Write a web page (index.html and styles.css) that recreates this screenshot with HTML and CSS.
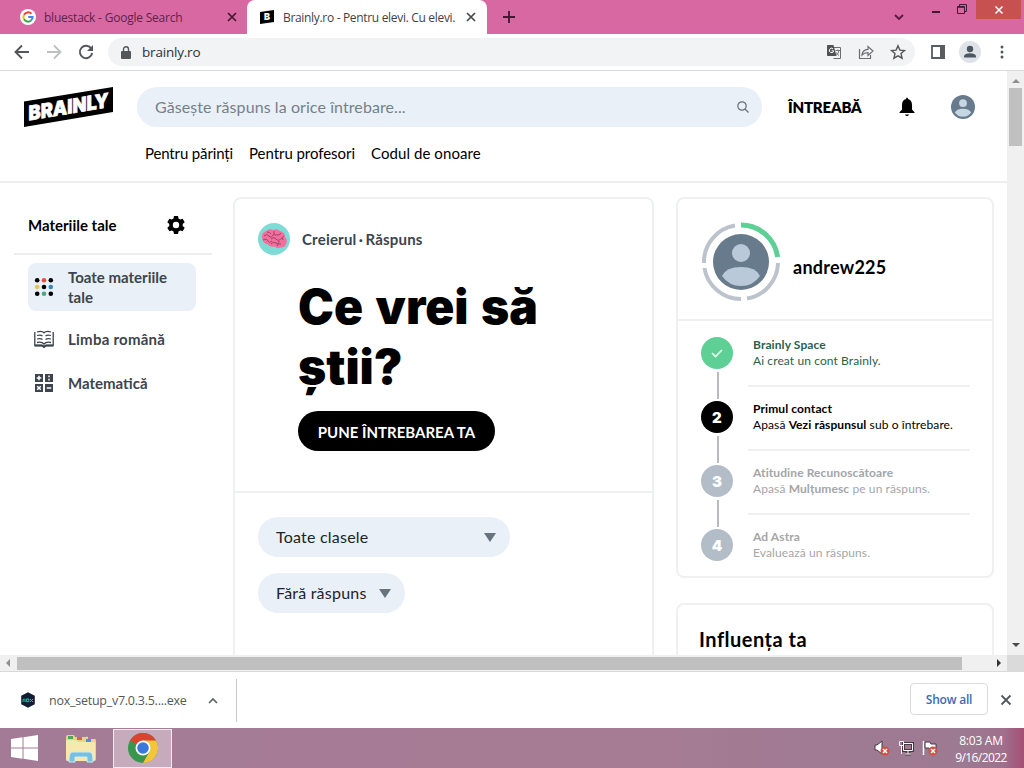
FILE: index.html
```
<!DOCTYPE html>
<html lang="ro">
<head>
  <meta charset="UTF-8">
  <title>Brainly.ro - Pentru elevi. Cu elevi.</title>
  <link rel="stylesheet" href="styles.css">
</head>
<body>

  <div class="tabstrip">
    <div class="tab">
      <svg class="favicon" width="16" height="16" viewBox="0 0 16 16">
        <circle cx="8" cy="8" r="8" fill="#fff"/>
        <g fill="none" stroke-width="2">
          <path d="M11.4 4.8A4.6 4.6 0 0 0 4 5.8" stroke="#ea4335"/>
          <path d="M4 5.8a4.6 4.6 0 0 0 0 4.5" stroke="#fbbc05"/>
          <path d="M4 10.3a4.6 4.6 0 0 0 7 1.2" stroke="#34a853"/>
          <path d="M11 11.5A4.6 4.6 0 0 0 12.6 8H8.2" stroke="#4285f4"/>
        </g>
      </svg>
      <span class="tab-title google">bluestack - Google Search</span>
      <svg class="tab-close" width="10" height="10" viewBox="0 0 10 10"><path d="M1 1l8 8M9 1l-8 8" stroke="#421832" stroke-width="1.7"/></svg>
    </div>
    <div class="tab active">
      <svg class="favicon" width="16" height="16" viewBox="0 0 16 16"><path d="M1 3l14-2v12L1 15z"/><text x="5" y="11.3" font-family="Inter" font-weight="900" font-size="9" fill="#fff">B</text></svg>
      <span class="tab-title brainly">Brainly.ro - Pentru elevi. Cu elevi.</span>
      <svg class="tab-close" width="10" height="10" viewBox="0 0 10 10"><path d="M1 1l8 8M9 1l-8 8" stroke="#44474a" stroke-width="1.7"/></svg>
    </div>
    <svg class="new-tab" width="12" height="12" viewBox="0 0 12 12"><path d="M6 0v12M0 6h12" stroke="#421832" stroke-width="1.8"/></svg>
    <div class="window-buttons">
      <svg class="tab-search" width="10" height="7" viewBox="0 0 10 7"><path d="M1 1l4 4 4-4" fill="none" stroke="#5a1741" stroke-width="1.8"/></svg>
      <svg class="minimize" width="8" height="2" viewBox="0 0 8 2"><path d="M0 0h8v2H0z" fill="#421832"/></svg>
      <svg class="restore" width="10" height="10" viewBox="0 0 10 10"><path d="M.5 2.5h7v7h-7zM.5 3.3h7M2.5 2V.5h7v7H8" fill="none" stroke="#421832"/></svg>
      <div class="window-close"><svg width="8" height="8" viewBox="0 0 8 8"><path d="M.5.5l7 7M7.5.5l-7 7" stroke="#fff" stroke-width="1.5"/></svg></div>
    </div>
  </div>

  <div class="toolbar">
    <svg width="16" height="16" viewBox="0 0 16 16"><path d="M15 8H2M8 1.5L1.5 8 8 14.5" fill="none" stroke="#54575a" stroke-width="1.9"/></svg>
    <svg width="16" height="16" viewBox="0 0 16 16"><path d="M1 8h13M8 1.5L14.5 8 8 14.5" fill="none" stroke="#bdbfc1" stroke-width="1.8"/></svg>
    <svg width="16" height="16" viewBox="0 0 16 16"><path d="M13.3 4.6A6.2 6.2 0 1 0 14.2 9" fill="none" stroke="#54575a" stroke-width="1.9"/><path d="M15 1v6H9z" fill="#54575a"/></svg>
    <div class="omnibox">
      <svg width="10" height="13" viewBox="0 0 10 13"><path d="M1 5h8q1 0 1 1v6q0 1-1 1H1q-1 0-1-1V6q0-1 1-1z" fill="#54575a"/><path d="M2.5 5.500V3.300a2.500 2.500 0 0 1 5 0V5.500" fill="none" stroke="#54575a" stroke-width="1.400"/></svg>
      <span class="url">brainly.ro</span>
      <svg width="16" height="16" viewBox="0 0 16 16"><path d="M5.500 3.500h9v11h-7" fill="none" stroke="#6b6e71"/><path d="M1.500 1h6l3 11h-9Q1 12 1 11V2q0-1 .5-1z" fill="#505356"/><path d="M7 4.800a2.200 2.200 0 1 0 .7 2H5.600" fill="none" stroke="#fff"/><path d="M9.500 6.500H14M11.700 5.500v1M13 6.500q-.5 3-3 5M10.300 8.500q1 2 2.700 3" fill="none" stroke="#777"/></svg>
      <svg width="16" height="16" viewBox="0 0 16 16"><path d="M1.500 5v9.500h11V11" fill="none" stroke="#6b6e71" stroke-width="1.200"/><path d="M4 11q.5-5.500 6-5.700V2.500L15 7l-5 4.500V8.700Q6 8.700 4 11z" fill="none" stroke="#6b6e71" stroke-width="1.200"/></svg>
      <svg width="16" height="16" viewBox="0 0 16 16"><path d="M8 1.800l1.900 4.300 4.600.4L11 9.600l1.100 4.600L8 11.800l-4.100 2.400L5 9.600 1.500 6.500l4.600-.4z" fill="none" stroke="#54575a" stroke-width="1.400"/></svg>
    </div>
    <svg class="side-panel" width="14" height="14" viewBox="0 0 14 14"><path d="M1 1h12v12H1z" fill="none" stroke="#5a5d60" stroke-width="1.800"/><path d="M9 0h5v14H9z" fill="#5a5d60"/></svg>
    <svg class="profile" width="22" height="22" viewBox="0 0 22 22"><circle cx="11" cy="11" r="11" fill="#dfe2e6"/><circle cx="11" cy="8" r="3.200" fill="#4b5864"/><path d="M5 16.500V15q1-2.700 6-2.700t6 2.700v1.500z" fill="#4b5864"/></svg>
    <svg width="4" height="14" viewBox="0 0 4 14" fill="#54575a"><circle cx="2" cy="2" r="1.500"/><circle cx="2" cy="7" r="1.500"/><circle cx="2" cy="12" r="1.500"/></svg>
  </div>

  <div class="viewport">
    <div class="page">
      <header class="header">
        <div class="header-row">
          <svg class="logo" width="89" height="40" viewBox="0 0 89 40">
            <path d="M0 14.500L89 0v25L0 40z"/>
            <text transform="translate(4.500 33.500) skewY(-9.500)" textLength="80" lengthAdjust="spacingAndGlyphs" font-family="Inter" font-weight="900" font-size="20" fill="#fff" stroke="#fff" stroke-width=".7">BRAINLY</text>
          </svg>
          <div class="search">
            <span>Găsește răspuns la orice întrebare...</span>
            <svg width="12" height="12" viewBox="0 0 12 12"><circle cx="5" cy="5" r="4.200" fill="none" stroke="#687078" stroke-width="1.200"/><path d="M8 8l3.500 3.500" stroke="#687078" stroke-width="1.300"/></svg>
          </div>
          <a class="ask">ÎNTREABĂ</a>
          <svg class="bell" width="16" height="20" viewBox="0 0 16 20"><path d="M7 2q0-1.500 1-1.500T9 2q4 .8 4 6v4.500l2.500 2.700V16H.5v-.8L3 12.500V8q0-5.200 4-6zM6 17.500h4q-.5 1.500-2 1.500t-2-1.500z"/></svg>
          <svg class="user" width="24" height="24" viewBox="0 0 56 56"><circle cx="28" cy="28" r="28" fill="#687b8c"/><circle cx="28" cy="19" r="9" fill="#c7d6e3"/><path d="M9 41q4-9 19-9t19 9q-7 10-19 10T9 41z" fill="#c7d6e3"/></svg>
        </div>
        <nav class="nav">
          <a class="parents">Pentru părinți</a>
          <a class="teachers">Pentru profesori</a>
          <a class="honor">Codul de onoare</a>
        </nav>
      </header>

      <main class="content">
        <aside class="subjects">
          <div class="subjects-head">
            <h2>Materiile tale</h2>
            <svg width="18" height="18" viewBox="0 0 18 18"><path d="M7 0h4l.5 2.600 1.700 1L15.700 2.700l2 3.500-2 1.700v2.200l2 1.700-2 3.500-2.500-.9-1.700 1L11 18H7l-.5-2.600-1.700-1-2.500.9-2-3.500 2-1.700V7.900l-2-1.700 2-3.500 2.500.9 1.700-1zM9 5.800a3.200 3.200 0 1 0 0 6.400 3.200 3.200 0 0 0 0-6.400z" fill-rule="evenodd"/></svg>
          </div>
          <ul>
            <li class="selected">
              <svg width="20" height="20" viewBox="0 0 20 20"><circle cx="3.200" cy="3.200" r="2.300"/><circle cx="10" cy="3.200" r="2.300" fill="#e6503f"/><circle cx="16.800" cy="3.200" r="2.300"/><circle cx="3.200" cy="10" r="2.300" fill="#e5c05c"/><circle cx="10" cy="10" r="2.300"/><circle cx="16.800" cy="10" r="2.300" fill="#3688bd"/><circle cx="3.200" cy="16.800" r="2.300"/><circle cx="10" cy="16.800" r="2.300" fill="#4ba982"/><circle cx="16.800" cy="16.800" r="2.300"/></svg>
              <span class="all-subjects">Toate materiile tale</span>
            </li>
            <li>
              <svg width="20" height="20" viewBox="0 0 20 20" fill="none" stroke="#3c444d" stroke-width="1.300"><path d="M.8 3v13.500h6.500q2 0 2.700 1.200.7-1.200 2.700-1.200h6.500V3"/><path d="M3 3q5-1.500 7 .8Q12 1.500 17 3M3 6.500q3.500-1 5.500.5M3 10q3.500-1 5.500.5M3 13.500q5-1 7 1.500 2-2.500 7-1.500M17 6.500q-3.500-1-5.500.5M17 10q-3.500-1-5.500.5"/><path d="M1 16.500h7l2 1.500 2-1.500h7" stroke-width="2"/></svg>
              <span class="romanian">Limba română</span>
            </li>
            <li>
              <svg width="20" height="20" viewBox="0 0 20 20"><path d="M1 1h8v8H1zM11 1h8v8h-8zM1 11h8v8H1zM11 11h8v8h-8z" fill="#3c444d"/><path d="M5 2.700v4.600M2.700 5h4.600M15 2.500v1.800M15 5.700v1.800M3.200 13.200l3.600 3.600M6.800 13.200l-3.600 3.600M12.700 15h4.600" stroke="#fff" stroke-width="1.500"/></svg>
              <span class="maths">Matematică</span>
            </li>
          </ul>
        </aside>

        <section class="card feed">
          <div class="question">
            <div class="author">
              <svg width="32" height="32" viewBox="0 0 32 32"><circle cx="16" cy="16" r="16" fill="#7fdbd6"/><path d="M4 15q-1-5 4-7 3-3 7-1 4-2 7 1 5 1 5 6 3 3 1 7-1 4-6 3.500-3 1.500-5-1-5 1-7-2-5-1-6-6.500z" fill="#f0719c"/><path d="M6 13q3-3 5 0t5-2M9 9q3 0 4 2M16 8q-1 4 3 4t4-2M5 17q4-2 5 1t4 0M13 16q3-3 5 0t6-1M13 21q2-3 5-1t3-2M19 23q0-3 4-2M26 13q-3 1-1 4" fill="none" stroke="#a83e68"/></svg>
              <span>Creierul · Răspuns</span>
            </div>
            <h1>Ce vrei să ştii?</h1>
            <button class="ask-button">PUNE ÎNTREBAREA TA</button>
          </div>
          <div class="filters">
            <div class="select classes"><span>Toate clasele</span><i></i></div>
            <div class="select answers"><span>Fără răspuns</span><i></i></div>
          </div>
        </section>

        <aside class="right">
          <div class="card progress">
            <div class="profile-head">
              <svg width="80" height="80" viewBox="0 0 80 80">
                <g fill="none" stroke="#bcc3cc" stroke-width="4">
                  <path d="M40 3a37 37 0 0 1 36.600 32" stroke="#5ecf95" stroke-width="5"/>
                  <path d="M77 41a37 37 0 0 1-31 35.500M40 77A37 37 0 0 1 3.400 46M3 41A37 37 0 0 1 34 3.500"/>
                </g>
                <circle cx="40" cy="40" r="28" fill="#687b8c"/><circle cx="40" cy="31" r="9" fill="#b9c9d9"/><path d="M21 54q4-9 19-9t19 9q-7 10-19 10t-19-10z" fill="#b9c9d9"/>
              </svg>
              <span>andrew225</span>
            </div>
            <ol class="steps">
              <li class="done">
                <b class="dot"><svg width="12" height="10" viewBox="0 0 12 10"><path d="M1 5l3.500 3.500L11 2" fill="none" stroke="#eafff4" stroke-width="1.600"/></svg></b>
                <div class="step-text"><strong>Brainly Space</strong><p>Ai creat un cont Brainly.</p></div>
              </li>
              <li class="current">
                <b class="dot">2</b>
                <div class="step-text"><strong>Primul contact</strong><p>Apasă <b>Vezi răspunsul</b> sub o întrebare.</p></div>
              </li>
              <li class="todo">
                <b class="dot">3</b>
                <div class="step-text"><strong>Atitudine Recunoscătoare</strong><p>Apasă <b>Mulțumesc</b> pe un răspuns.</p></div>
              </li>
              <li class="todo">
                <b class="dot">4</b>
                <div class="step-text"><strong>Ad Astra</strong><p>Evaluează un răspuns.</p></div>
              </li>
            </ol>
          </div>
          <div class="card influence"><h3>Influența ta</h3></div>
        </aside>
      </main>
    </div>
    <div class="vscroll">
      <i class="arrow up"></i>
      <div class="vthumb"></div>
      <i class="arrow down"></i>
    </div>
  </div>

  <div class="hscroll">
    <i class="arrow left"></i>
    <div class="hthumb"></div>
    <i class="arrow rightward"></i>
    <div class="corner"></div>
  </div>

  <div class="downloads">
    <div class="download">
      <svg width="16" height="16" viewBox="0 0 16 16"><path d="M8 .3l6.800 3.500v8.400L8 15.700 1.200 12.200V3.800z" fill="#111d30"/><path d="M3 10V7.500q2-1 2 0V10M6.300 7h2.500v2.700H6.300zM10 7l3 3M13 7l-3 3" fill="none" stroke="#26bfa6"/></svg>
      <span>nox_setup_v7.0.3.5....exe</span>
      <svg width="10" height="7" viewBox="0 0 10 7"><path d="M1 6l4-4 4 4" fill="none" stroke="#5f6368" stroke-width="1.700"/></svg>
    </div>
    <button class="show-all">Show all</button>
    <svg width="12" height="12" viewBox="0 0 12 12"><path d="M1.500 1.500l9 9M10.500 1.500l-9 9" stroke="#54575a" stroke-width="1.800"/></svg>
  </div>

  <div class="taskbar">
    <svg class="start" width="27" height="26" viewBox="0 0 27 26" fill="#fff"><path d="M0 4l11.500-1.700v10.200H0zM12.500 2.200L27 0v12.500H12.500zM0 13.500h11.500v10.200L0 22zM12.500 13.500H27V26l-14.500-2.200z"/></svg>
    <svg class="explorer" width="32" height="29" viewBox="0 0 32 29">
      <path d="M1 3q0-2 2-2h6l1 2h11q1-1 2 0v2h7q1 0 1 2v18q0 2-2 2H3q-2 0-2-2z" fill="#ead28a"/>
      <path d="M3 2h5v3H3z" fill="#4ba55b"/><path d="M12 3h5v3h-5z" fill="#d4654b"/><path d="M21 5h5v3h-5z" fill="#4b94cf"/>
      <path d="M1 6h10l2 2h17v17q0 2-2 2H3q-2 0-2-2z" fill="#f6e8ae"/>
      <path d="M4 28q0-10 3-10h18q3 0 3 10h-6v-5H10v5z" fill="#79bfdf" stroke="#c9edf7"/>
    </svg>
    <div class="task-chrome">
      <svg width="30" height="30" viewBox="0 0 30 30"><circle cx="15" cy="15" r="15" fill="#39964d"/><path d="M15 15L2 7.500A15 15 0 0 1 28 7.500z" fill="#d9432f"/><path d="M15 7.500h13A15 15 0 0 1 15 30l6.500-11.300z" fill="#f3c53b"/><circle cx="15" cy="15" r="7.500" fill="#fff"/><circle cx="15" cy="15" r="5.800" fill="#3b78dc"/></svg>
    </div>
    <div class="tray">
      <svg width="16" height="16" viewBox="0 0 16 16"><path d="M1 5h2l5-4v13l-5-4H1z" fill="#fff" stroke="#4b3543"/><circle cx="11" cy="11" r="4.500" fill="#d1503e"/><path d="M9 9l4 4M13 9l-4 4" stroke="#fff" stroke-width="1.500"/></svg>
      <svg width="16" height="16" viewBox="0 0 16 16" fill="none" stroke="#fff"><path d="M5.500 3.500h9v7h-9zM10 11v3M7 14h6" stroke="#493641" stroke-width="3"/><path d="M5.500 3.500h9v7h-9zM10 11v3M7 14h6M1.500 1.500h4v4h-4zM3.500 5.500V14"/></svg>
      <svg width="16" height="16" viewBox="0 0 16 16"><path d="M1.500 1v14" stroke="#fff" stroke-width="1.500"/><path d="M3 2h5l1 2h5v5H8L7 8H3z" fill="#fff" stroke="#4b3543"/><circle cx="11" cy="11" r="4.500" fill="#d1503e"/><path d="M9 9l4 4M13 9l-4 4" stroke="#fff" stroke-width="1.500"/></svg>
    </div>
    <div class="clock"><span>8:03 AM</span><span class="date">9/16/2022</span></div>
  </div>

</body>
</html>
```
FILE: styles.css
```
* {
  box-sizing: border-box;
}

body {
  margin: 0;
  width: 1024px;
  height: 768px;
  overflow: hidden;
  display: flex;
  flex-direction: column;
  font-family: "Open Sans", sans-serif;
  background: #fff;
}

svg {
  flex: none;
  display: block;
  overflow: visible;
}

h1, h2, h3, p, ul, ol {
  margin: 0;
  padding: 0;
}

span, a, strong, h2, h3, p {
  white-space: nowrap;
}

/* browser tabs */
.tabstrip {
  height: 34px;
  flex: none;
  display: flex;
  background: #d868a2;
}

.tab {
  display: flex;
  align-items: center;
  width: 247px;
  padding-left: 20px;
}

.tab.active {
  width: 240px;
  padding-left: 12px;
  background: #fff;
  border-radius: 8px 8px 0 0;
}

.tab-title {
  flex: 1;
  margin-left: 8px;
  font-size: 12px;
  color: #3f4245;
}

.tab-title.google {
  color: #642148;
  letter-spacing: -0.22px;
}

.tab-title.brainly {
  letter-spacing: -0.32px;
}

.tab-close {
  margin-right: 10px;
}

.tab.active .tab-close {
  margin-right: 11px;
}

.new-tab {
  margin: 11px 0 0 16px;
}

.window-buttons {
  display: flex;
  margin-left: auto;
}

.tab-search {
  margin: 14px 28px 0 0;
}

.minimize {
  margin: 11px 17px 0 0;
}

.restore {
  margin: 4px 9px 0 0;
}

.window-close {
  display: flex;
  justify-content: center;
  align-items: center;
  width: 45px;
  height: 19px;
  margin-right: 3px;
  background: #c75050;
}

/* address bar */
.toolbar {
  height: 37px;
  flex: none;
  display: flex;
  align-items: center;
  gap: 16px;
  padding: 0 20px 0 14px;
  border-bottom: 1px solid #d9dadb;
}

.omnibox {
  flex: 1;
  display: flex;
  align-items: center;
  height: 28px;
  margin-left: -2px;
  padding: 0 9px 0 13px;
  gap: 16px;
  border-radius: 14px;
  background: #f1f3f5;
}

.url {
  flex: 1;
  margin-left: -5px;
  font-size: 13.5px;
  letter-spacing: -0.2px;
  color: #2f3235;
}

.profile {
  margin: 0 3px 0 -2px;
}

/* page area */
.viewport {
  flex: none;
  height: 584px;
  display: flex;
  overflow: hidden;
}

.page {
  width: 1007px;
  overflow: hidden;
  font-family: Lato, sans-serif;
}

.header {
  height: 112px;
  padding: 16px 32px 0 24px;
  border-bottom: 2px solid #eceeef;
}

.header-row {
  display: flex;
  align-items: center;
}

.search {
  display: flex;
  justify-content: space-between;
  align-items: center;
  width: 625px;
  height: 40px;
  margin: 0 26px 0 24px;
  padding: 0 13px 0 18px;
  border-radius: 20px;
  background: #e9f0f7;
  font-size: 16px;
  letter-spacing: 0.08px;
  color: #75808a;
}

.search span {
  padding-bottom: 2px;
}

.ask {
  width: 73px;
  font-size: 15px;
  font-weight: 800;
  letter-spacing: -0.2px;
}

.bell {
  margin-left: 38px;
}

.user {
  margin-left: 36px;
}

.nav {
  display: flex;
  gap: 16px;
  margin: 14px 0 0 121px;
  font-size: 15px;
  line-height: 24px;
}

.parents {
  letter-spacing: -0.14px;
}

.teachers {
  letter-spacing: -0.05px;
}

.honor {
  letter-spacing: 0.08px;
}

.content {
  display: flex;
  padding: 14px 0 0 14px;
}

.subjects {
  width: 198px;
  margin-right: 21px;
}

.subjects-head {
  display: flex;
  justify-content: space-between;
  align-items: center;
  height: 58px;
  padding: 0 27px 0 14px;
  border-bottom: 2px solid #eceeef;
}

.subjects h2 {
  font-size: 15px;
  line-height: 20px;
}

.subjects ul {
  list-style: none;
  padding: 8px 16px 0 14px;
}

.subjects li {
  display: flex;
  align-items: center;
  height: 44px;
  padding-left: 6px;
  gap: 14px;
  font-size: 15px;
  font-weight: bold;
  line-height: 20px;
  color: #3c444d;
}

.subjects li.selected {
  height: 48px;
  margin-bottom: 6px;
  padding-right: 16px;
  border-radius: 8px;
  background: #e9f0f8;
}

.all-subjects {
  white-space: normal;
}

.romanian {
  letter-spacing: 0.25px;
}

.card {
  border: 2px solid #eef0f1;
  border-radius: 8px;
}

.feed {
  width: 421px;
  height: 480px;
  margin-right: 22px;
}

.question {
  height: 294px;
  padding: 24px 23px 0;
  border-bottom: 2px solid #eef0f1;
}

.author {
  display: flex;
  align-items: center;
  gap: 12px;
  font-size: 15px;
  font-weight: bold;
  letter-spacing: 0.2px;
  word-spacing: -1.5px;
  color: #3c444d;
}

.question h1 {
  width: 260px;
  margin: 22px 0 0 40px;
  font-family: Inter, sans-serif;
  font-size: 48px;
  font-weight: 900;
  line-height: 60px;
  word-spacing: 3px;
}

.ask-button {
  width: 197px;
  height: 40px;
  margin: 14px 0 0 40px;
  padding: 1px 0 0;
  border: 0;
  border-radius: 20px;
  background: #000;
  color: #fff;
  font: bold 15px Lato, sans-serif;
  white-space: nowrap;
}

.filters {
  padding: 24px 23px;
}

.select {
  display: flex;
  justify-content: space-between;
  align-items: center;
  width: 252px;
  height: 40px;
  padding: 0 14px 0 18px;
  margin-bottom: 16px;
  border-radius: 20px;
  background: #e9f0f7;
  font-size: 16px;
  letter-spacing: 0.22px;
  color: #20242a;
}

.select span {
  padding-bottom: 2px;
}

.select.answers {
  width: 147px;
}

.select i {
  border: 6.5px solid transparent;
  border-top: 9px solid #67737f;
  border-bottom: 0;
}

/* progress card */
.right {
  width: 318px;
}

.progress {
  height: 381px;
}

.profile-head {
  display: flex;
  align-items: center;
  gap: 12px;
  height: 122px;
  padding: 6px 0 0 23px;
  border-bottom: 2px solid #eef0f1;
  font-size: 18px;
  font-weight: bold;
  letter-spacing: 0.25px;
}

.profile-head span {
  margin-top: 9px;
}

.steps {
  list-style: none;
  padding: 0 22px 0 23px;
}

.steps li {
  position: relative;
  display: flex;
  align-items: center;
  gap: 15px;
  height: 64px;
  font-size: 12px;
  line-height: 16px;
  letter-spacing: 0.1px;
}

.steps li + li::before {
  content: "";
  position: absolute;
  left: 16px;
  top: -13px;
  width: 2px;
  height: 27px;
  background: #b6bcc2;
}

.dot {
  display: flex;
  justify-content: center;
  align-items: center;
  width: 32px;
  height: 32px;
  border-radius: 50%;
  background: #b2bdc7;
  color: #fff;
  font: 900 15px Inter, sans-serif;
}

.step-text {
  flex: 1;
  align-self: flex-start;
  height: 66px;
  padding: 16px 0 0 5px;
  border-bottom: 2px solid #eef0f1;
}

.steps li:last-child .step-text {
  border: 0;
}

.done {
  color: #2b5f4c;
}

.done .dot {
  background: #5ecf95;
}

.current .dot {
  background: #000;
}

.todo {
  color: #a3a6a9;
}

.influence {
  height: 100px;
  margin-top: 25px;
  padding: 20px 21px;
}

.influence h3 {
  font-size: 20px;
  line-height: 28px;
  letter-spacing: 0.5px;
}

/* scrollbars */
.vscroll {
  width: 17px;
  display: flex;
  flex-direction: column;
  align-items: center;
  background: #f0f0f0;
}

.arrow {
  border: 4px solid transparent;
}

.arrow.up {
  border-top: 0;
  border-bottom-color: #8f8f8f;
  margin: 8px 0 5px;
}

.arrow.down {
  border-bottom: 0;
  border-top-color: #4a4a4a;
  margin: auto 0 8px;
}

.vthumb {
  width: 13px;
  height: 58px;
  background: #c0c0c0;
}

.hscroll {
  height: 17px;
  flex: none;
  display: flex;
  align-items: center;
  background: #f0f0f0;
  border-bottom: 1px solid #d9dadb;
}

.arrow.left {
  border-left: 0;
  border-right-color: #8f8f8f;
  margin: 0 7px 0 6px;
}

.hthumb {
  width: 945px;
  height: 13px;
  background: #c0c0c0;
}

.arrow.rightward {
  border-right: 0;
  border-left-color: #333;
  margin-left: 35px;
}

.corner {
  width: 17px;
  height: 16px;
  margin-left: auto;
  background: #dadada;
}

/* download shelf */
.downloads {
  height: 56px;
  flex: none;
  display: flex;
  align-items: center;
  padding-right: 12px;
}

.download {
  display: flex;
  align-items: center;
  width: 237px;
  height: 43px;
  padding: 0 18px 0 20px;
  border-right: 1px solid #c9cacc;
}

.download span {
  flex: 1;
  margin-left: 13px;
  font-size: 12.5px;
  letter-spacing: -0.25px;
  color: #54575a;
}

.show-all {
  width: 78px;
  height: 32px;
  margin: -2px 12px 0 auto;
  border: 1px solid #d8dbdf;
  border-radius: 4px;
  background: #fff;
  color: #3b6bb5;
  font: 600 12px "Open Sans", sans-serif;
  letter-spacing: -0.2px;
}

/* windows taskbar */
.taskbar {
  height: 40px;
  flex: none;
  display: flex;
  align-items: center;
  background: linear-gradient(90deg, #a47b96, #a67c94 60%, #9c7a92 94%, #a0708c 98%, #a44f75);
  color: #fff;
}

.start {
  margin-left: 11px;
}

.explorer {
  margin-left: 27px;
}

.task-chrome {
  display: flex;
  justify-content: center;
  align-items: center;
  width: 59px;
  height: 39px;
  margin-left: 16px;
  border: 1px solid #f3e9f0;
  background: #c5abbc;
}

.tray {
  display: flex;
  gap: 8px;
  margin-left: auto;
}

.clock {
  display: flex;
  flex-direction: column;
  align-items: center;
  width: 86px;
  padding-top: 2px;
  font-size: 12px;
  line-height: 17px;
  letter-spacing: -0.25px;
}

.date {
  letter-spacing: -0.6px;
}
```
